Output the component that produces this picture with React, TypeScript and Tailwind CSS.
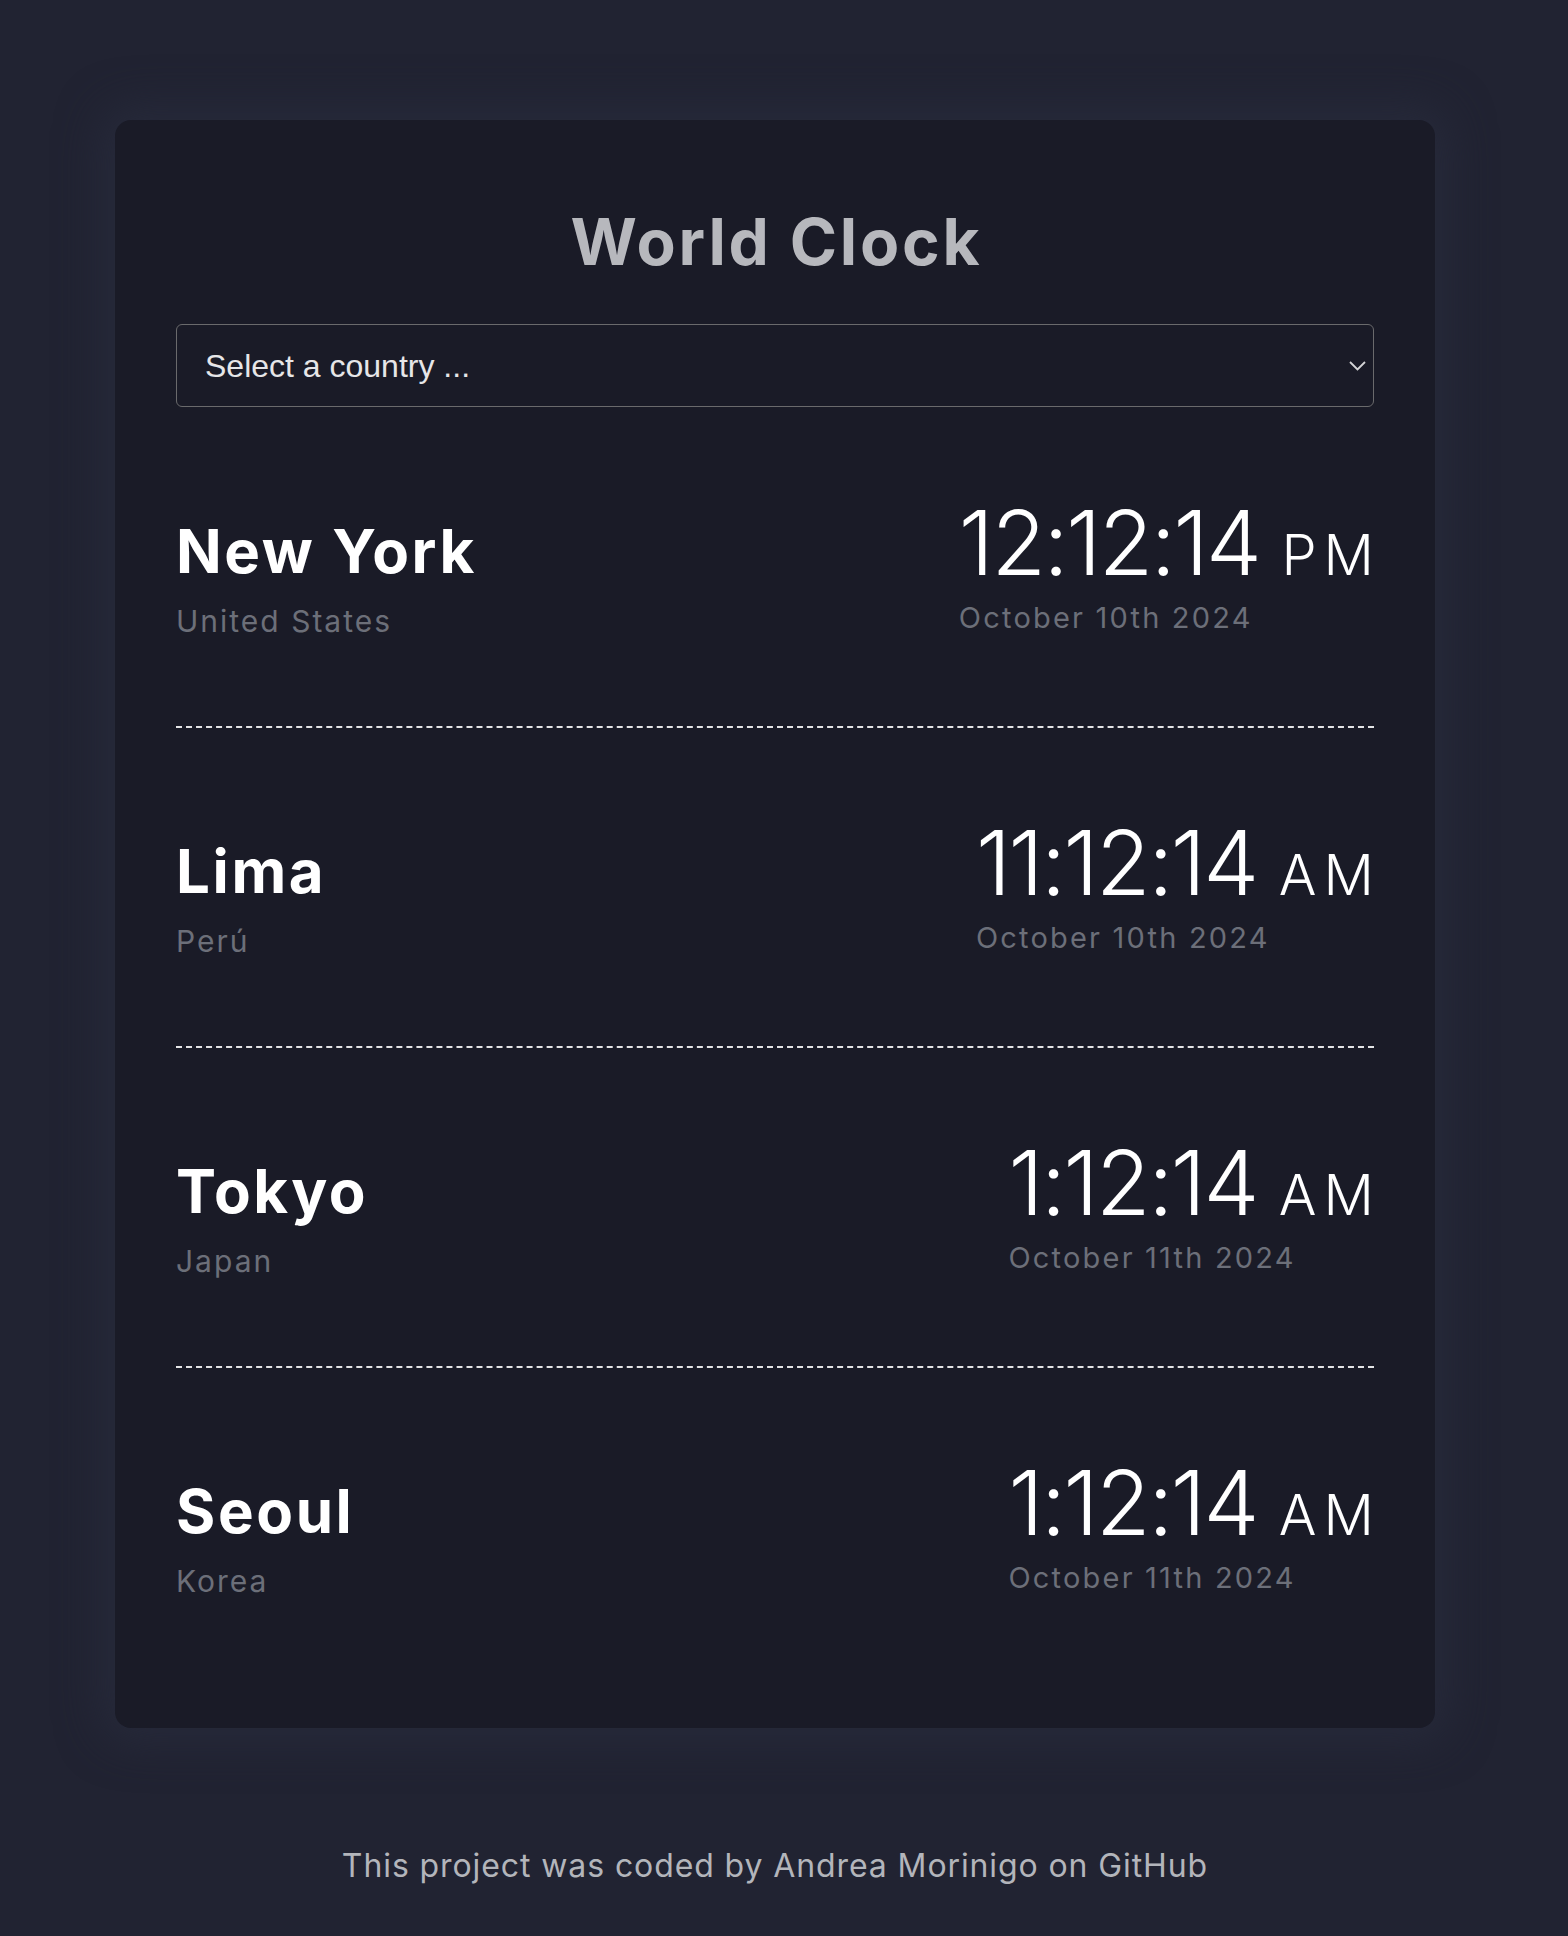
import React from "react";

const cities = [
  { name: "New York", country: "United States", time: "12:12:14", ampm: "PM", date: "October 10th 2024" },
  { name: "Lima", country: "Perú", time: "11:12:14", ampm: "AM", date: "October 10th 2024" },
  { name: "Tokyo", country: "Japan", time: "1:12:14", ampm: "AM", date: "October 11th 2024" },
  { name: "Seoul", country: "Korea", time: "1:12:14", ampm: "AM", date: "October 11th 2024" },
];

export default function App() {
  return (
    <div
      className="min-h-[1936px] w-full bg-[#212332] pt-[120px]"
      style={{ fontFamily: "Inter, 'Noto Sans', sans-serif" }}
    >
      <div className="ml-[115px] w-[1320px] rounded-[16px] bg-[#1a1b27] px-[61px] pt-[90px] pb-[42px] shadow-[0_0_45px_12px_rgba(40,43,60,0.9)]">
        <h1 className="pl-[3px] text-center text-[64px] font-bold leading-none tracking-[2.8px] text-[#b7b8bd]">
          World Clock
        </h1>
        <div className="relative mt-[50px]">
          <select
            className="block h-[83px] w-full appearance-none rounded-[6px] border border-[#6a6a6c] bg-transparent pl-[28px] text-[32px] text-[#e6e6e8] outline-none"
            style={{ fontFamily: "'Liberation Sans', Arial, sans-serif" }}
            defaultValue=""
          >
            <option value="">Select a country ...</option>
          </select>
          <svg
            className="pointer-events-none absolute right-[8px] top-[37px]"
            width="17"
            height="10"
            viewBox="0 0 17 10"
            fill="none"
          >
            <path d="M1 1L8.5 8.5L16 1" stroke="#d4d4d6" strokeWidth="1.8" />
          </svg>
        </div>
        <div className="mt-[1px]">
          {cities.map((c, i) => (
            <div
              key={c.name}
              className={
                i < cities.length - 1
                  ? "flex items-start justify-between border-b-2 border-dashed border-[#e4e4e6] pt-[90px] pb-[90px]"
                  : "flex items-start justify-between pt-[90px] pb-[90px]"
              }
            >
              <div className="mt-[23px]">
                <div className="text-[60px] font-bold leading-none tracking-[2.6px] text-white">{c.name}</div>
                <div className="mt-[25px] text-[30px] leading-none tracking-[2px] text-[#6c6f79]">{c.country}</div>
              </div>
              <div className="-mr-[7px]">
                <div className="leading-none text-white">
                  <span className="text-[89px] font-light tracking-[-2.5px]">{c.time}</span>
                  <span className="ml-[22px] text-[56px] font-light tracking-[7px]">{c.ampm}</span>
                </div>
                <div className="mt-[16px] text-[29px] leading-none tracking-[2.2px] text-[#6c6f79]">{c.date}</div>
              </div>
            </div>
          ))}
        </div>
      </div>
      <div className="ml-[115px] mt-[122px] w-[1320px] text-center text-[32px] leading-none tracking-[0.9px] text-[#b3b5bb]">
        This project was coded by Andrea Morinigo on GitHub
      </div>
    </div>
  );
}
